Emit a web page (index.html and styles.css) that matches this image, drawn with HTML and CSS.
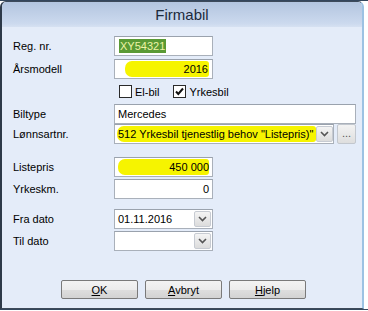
FILE: index.html
```html
<!DOCTYPE html>
<html lang="no">
<head>
    <meta charset="UTF-8">
    <title>Firmabil</title>
    <link rel="stylesheet" href="styles.css">
</head>
<body>
    <div class="window">
        <div class="titlebar">Firmabil</div>
        <div class="content">
            <div class="row">
                <span class="label">Reg. nr.</span>
                <div class="box short"><span class="selected">XY54321</span></div>
            </div>
            <div class="row gap-3">
                <span class="label">Årsmodell</span>
                <div class="box short right"><span class="mark mark-year">2016</span></div>
            </div>
            <div class="checks">
                <span class="check"><span class="checkbox"></span>El-bil</span>
                <span class="check"><span class="checkbox">
                    <svg width="11" height="11" viewBox="0 0 11 11"><path d="M2 5.5 L4.3 8 L9 2.5" fill="none" stroke="#111" stroke-width="2"/></svg>
                </span>Yrkesbil</span>
            </div>
            <div class="row gap-6">
                <span class="label">Biltype</span>
                <div class="box wide">Mercedes</div>
            </div>
            <div class="row">
                <span class="label">Lønnsartnr.</span>
                <div class="box combo-wide">
                    <span class="mark mark-type">512 Yrkesbil tjenestlig behov "Listepris)"</span>
                    <span class="drop"><svg width="9" height="6" viewBox="0 0 9 6"><path d="M1 1 L4.5 4.5 L8 1" fill="none" stroke="#555" stroke-width="1.6"/></svg></span>
                </div>
                <span class="dots">...</span>
            </div>
            <div class="row gap-13">
                <span class="label">Listepris</span>
                <div class="box short right"><span class="mark mark-price">450 000</span></div>
            </div>
            <div class="row gap-2">
                <span class="label">Yrkeskm.</span>
                <div class="box short right">0</div>
            </div>
            <div class="row gap-10">
                <span class="label">Fra dato</span>
                <div class="box short combo">
                    <span class="value">01.11.2016</span>
                    <span class="drop"><svg width="9" height="6" viewBox="0 0 9 6"><path d="M1 1 L4.5 4.5 L8 1" fill="none" stroke="#555" stroke-width="1.6"/></svg></span>
                </div>
            </div>
            <div class="row gap-2">
                <span class="label">Til dato</span>
                <div class="box short combo">
                    <span class="value"></span>
                    <span class="drop"><svg width="9" height="6" viewBox="0 0 9 6"><path d="M1 1 L4.5 4.5 L8 1" fill="none" stroke="#555" stroke-width="1.6"/></svg></span>
                </div>
            </div>
            <div class="buttons">
                <button><u>O</u>K</button>
                <button><u>A</u>vbryt</button>
                <button><u>H</u>jelp</button>
            </div>
        </div>
    </div>
</body>
</html>
```

FILE: styles.css
```css
html {
    background: linear-gradient(#34465c 0, #34465c 1px, #ffffff 1px);
}
body {
    margin: 0;
    font-family: 'Liberation Sans', Arial, sans-serif;
    font-size: 11px;
    color: #000;
}
.window {
    box-sizing: border-box;
    width: 364px;
    height: 308px;
    margin-top: 1px;
    border: 1px solid #3d4a5a;
    border-left: 2px solid #2e3a49;
    border-right: 2px solid #9cc2e3;
    border-radius: 6px 6px 0 0;
    background-color: #e4ecf9;
    overflow: hidden;
}
.titlebar {
    height: 25px;
    line-height: 26px;
    text-align: center;
    font-size: 15px;
    color: #1c2a3c;
    background: linear-gradient(#b3c5df, #cbd9ee 85%, #d6e1f2);
}
.content {
    padding: 9px 0 0 11px;
}
.row {
    display: flex;
    align-items: center;
    height: 20px;
}
.gap-2 { margin-top: 2px; }
.gap-3 { margin-top: 3px; }
.gap-6 { margin-top: 6px; }
.gap-10 { margin-top: 10px; }
.gap-13 { margin-top: 13px; }
.label {
    width: 101px;
    flex-shrink: 0;
}
.box {
    box-sizing: border-box;
    height: 20px;
    border: 1px solid #a9b0ba;
    border-top-color: #9aa2ad;
    background: #fff;
    display: flex;
    align-items: center;
    padding: 0 3px;
    white-space: nowrap;
}
.short { width: 99px; }
.wide { width: 242px; }
.combo-wide { width: 220px; padding-left: 2px; }
.right { justify-content: flex-end; }
.selected {
    background: #5a9a35;
    color: #eef4a6;
    padding: 1px 1px;
    margin-left: 1px;
}
.mark {
    background: #f6f400;
    border-radius: 7px 3px 3px 7px;
    padding: 2px 0;
}
.mark-year { width: 83px; text-align: right; padding-right: 1px; }
.mark-price { width: 91px; text-align: right; }
.mark-type { padding: 2px 3px 2px 1px; }
.combo { padding-right: 1px; }
.combo .value { flex: 1; }
.combo-wide .mark { margin-right: auto; }
.drop {
    box-sizing: border-box;
    width: 17px;
    height: 16px;
    border: 1px solid #c7cbd2;
    border-radius: 2px;
    background: linear-gradient(#f4f4f4, #dcdcdc);
    display: flex;
    align-items: center;
    justify-content: center;
    flex-shrink: 0;
}
.dots {
    box-sizing: border-box;
    width: 19px;
    height: 20px;
    margin-left: 3px;
    border: 1px solid #c2c7ce;
    border-radius: 2px;
    background: linear-gradient(#f3f3f3, #dedede);
    color: #555;
    text-align: center;
    line-height: 16px;
}
.checks {
    display: flex;
    align-items: center;
    height: 13px;
    margin-top: 6px;
    padding-left: 106px;
}
.check {
    display: flex;
    align-items: center;
    margin-right: 14px;
}
.checkbox {
    box-sizing: border-box;
    width: 13px;
    height: 13px;
    border: 1px solid #2a2a2a;
    background: #fff;
    margin-right: 3px;
    display: flex;
    align-items: center;
    justify-content: center;
}
.buttons {
    display: flex;
    gap: 7px;
    margin: 29px 0 0 48px;
}
button {
    box-sizing: border-box;
    width: 77px;
    height: 19px;
    padding: 0;
    border: 1px solid #7a7a7a;
    border-radius: 2px;
    background: linear-gradient(#f3f3f3 0%, #ececec 50%, #dedede 51%, #d3d3d3 100%);
    font-family: 'Liberation Sans', Arial, sans-serif;
    font-size: 11px;
    color: #000;
}
```
